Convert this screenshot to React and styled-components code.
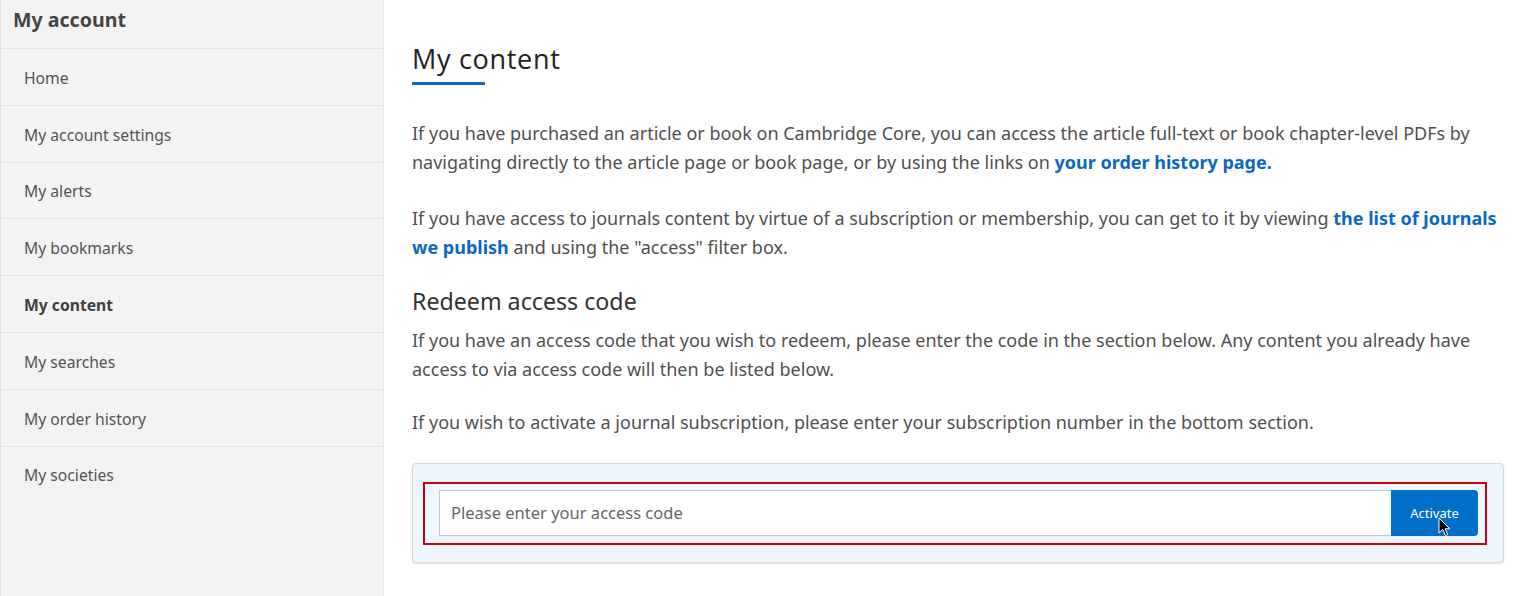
import React from "react";
import styled, { createGlobalStyle } from "styled-components";

const Global = createGlobalStyle`
  html, body { margin: 0; padding: 0; background: #fff; }
  body { font-family: "Noto Sans", "Open Sans", sans-serif; }
  * { box-sizing: border-box; }
`;

const Page = styled.div`
  display: flex;
  min-height: 596px;
`;

const Sidebar = styled.nav`
  width: 384px;
  flex: none;
  background: #f3f3f3;
  border-left: 1px solid #e2e2e2;
  border-right: 1px solid #e6e6e6;
`;

const SideTitle = styled.div`
  height: 48px;
  padding: 6px 0 0 12px;
  font-size: 19.6px;
  font-weight: 700;
  color: #454545;
  line-height: 28px;
`;

const SideItem = styled.a`
  display: flex;
  align-items: center;
  height: 56.8px;
  padding: 2px 0 0 23px;
  border-top: 1px solid #e3e3e3;
  font-size: 15.7px;
  color: ${(p) => (p.$active ? "#404040" : "#555")};
  font-weight: ${(p) => (p.$active ? 700 : 400)};
  text-decoration: none;
`;

const Main = styled.main`
  flex: 1;
  padding: 43px 16px 0 28px;
  color: #4e4e4e;
`;

const Title = styled.h1`
  margin: 0;
  font-family: "Open Sans", sans-serif;
  font-weight: 400;
  font-size: 27px;
  line-height: 32px;
  color: #222;
  letter-spacing: 0.7px;
`;

const TitleBar = styled.div`
  width: 73px;
  height: 3px;
  background: #0b6bc7;
  margin: 7px 0 34px;
`;

const Para = styled.p`
  margin: 0 0 ${(p) => p.$mb ?? 28}px;
  font-size: 18px;
  line-height: 28.5px;
  color: #505050;
`;

const Link = styled.a`
  color: #0b68c2;
  font-weight: 700;
  text-decoration: none;
`;

const SubTitle = styled.h2`
  margin: 0 0 11px;
  font-weight: 400;
  font-size: 23.2px;
  line-height: 27px;
  color: #333;
`;

const Box = styled.div`
  border: 1px solid #d8d8d8;
  border-radius: 4px;
  background: #edf5fd;
  box-shadow: 0 1px 2px rgba(0, 0, 0, 0.12);
  padding: 18px 16px 17px 10px;
`;

const Form = styled.form`
  display: flex;
  border: 2px solid #c8000e;
  padding: 6px 7px 7px 14px;
`;

const Input = styled.input`
  flex: 1;
  height: 46px;
  border: 1px solid #c9c9c9;
  border-right: none;
  padding: 0 11px;
  font-family: "Noto Sans", sans-serif;
  font-size: 16.5px;
  color: #333;
  background: #fff;
  outline: none;
  &::placeholder { color: #666; }
`;

const Button = styled.button`
  position: relative;
  width: 87px;
  height: 46px;
  border: none;
  border-radius: 0 4px 4px 0;
  background: #006fca;
  color: #fff;
  font-family: "Noto Sans", sans-serif;
  font-size: 13px;
  cursor: pointer;
  padding: 0;
`;

const Cursor = styled.svg`
  position: absolute;
  left: 47px;
  top: 27px;
  width: 13px;
  height: 20px;
`;

const items = [
  "Home",
  "My account settings",
  "My alerts",
  "My bookmarks",
  "My content",
  "My searches",
  "My order history",
  "My societies",
];

export default function App() {
  return (
    <>
      <Global />
      <Page>
        <Sidebar>
          <SideTitle>My account</SideTitle>
          {items.map((t) => (
            <SideItem key={t} $active={t === "My content"}>
              {t}
            </SideItem>
          ))}
        </Sidebar>
        <Main>
          <Title>My content</Title>
          <TitleBar />
          <Para>
            If you have purchased an article or book on Cambridge Core, you can access the article full-text or book chapter-level PDFs by navigating directly to the article page or book page, or by using the links on <Link>your order history page.</Link>
          </Para>
          <Para $mb={27}>
            If you have access to journals content by virtue of a subscription or membership, you can get to it by viewing <Link>the list of journals we publish</Link> and using the "access" filter box.
          </Para>
          <SubTitle>Redeem access code</SubTitle>
          <Para $mb={25}>
            If you have an access code that you wish to redeem, please enter the code in the section below. Any content you already have access to via access code will then be listed below.
          </Para>
          <Para $mb={26}>
            If you wish to activate a journal subscription, please enter your subscription number in the bottom section.
          </Para>
          <Box>
            <Form onSubmit={(e) => e.preventDefault()}>
              <Input placeholder="Please enter your access code" />
              <Button type="submit">
                Activate
                <Cursor viewBox="0 0 13 20">
                  <path d="M1 1 L1 16 L4.8 12.3 L7.4 18.5 L9.6 17.5 L7.1 11.8 L11.8 11.8 Z" fill="#000" stroke="#fff" strokeWidth="1" strokeLinejoin="round" />
                </Cursor>
              </Button>
            </Form>
          </Box>
        </Main>
      </Page>
    </>
  );
}
